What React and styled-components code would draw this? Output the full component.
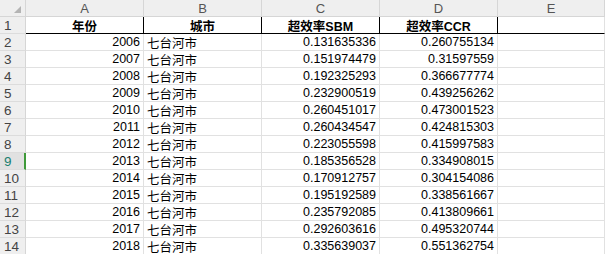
import React from 'react';
import styled, { createGlobalStyle } from 'styled-components';

const GlobalStyle = createGlobalStyle`
    body {
        margin: 0;
        background: #ffffff;
        font-family: "Liberation Sans", "Noto Sans CJK SC", sans-serif;
    }
`;

const Sheet = styled.div`
    display: grid;
    grid-template-columns: 26px 118px 118px 118px 118px 1fr;
    grid-auto-rows: 17px;
    width: 605px;
    height: 254px;
    overflow: hidden;
`;

const Corner = styled.div`
    background: #efefef;
    border-right: 1px solid #d6d6d6;
    border-bottom: 1px solid #d6d6d6;
    position: relative;
    &::after {
        content: '';
        position: absolute;
        right: 4px;
        bottom: 3px;
        border-left: 7px solid transparent;
        border-bottom: 7px solid #b4b4b4;
    }
`;

const ColHead = styled.div`
    background: #efefef;
    border-right: 1px solid #d6d6d6;
    border-bottom: 1px solid #d6d6d6;
    color: #555555;
    font-size: 13px;
    display: flex;
    align-items: center;
    justify-content: center;
`;

const RowHead = styled.div`
    background: ${p => (p.active ? '#e1e1e1' : '#efefef')};
    border-right: ${p => (p.active ? '2px solid #3f9a3a' : '1px solid #d6d6d6')};
    border-bottom: 1px solid #dcdcdc;
    color: ${p => (p.active ? '#1a7f6f' : '#444444')};
    font-size: 13.5px;
    padding-left: 4px;
    display: flex;
    align-items: center;
`;

const Cell = styled.div`
    border-right: 1px solid ${p => (p.head && !p.last ? '#000000' : '#e1e1e1')};
    border-bottom: 1px solid ${p => (p.head ? '#000000' : '#e1e1e1')};
    font-size: 12.5px;
    font-weight: ${p => (p.head ? 700 : 400)};
    color: #000000;
    display: flex;
    align-items: center;
    justify-content: ${p => (p.align === 'right' ? 'flex-end' : p.align === 'center' ? 'center' : 'flex-start')};
    padding: 0 3px;
    white-space: nowrap;
    overflow: hidden;
`;

const rows = [
    ['2006', '0.131635336', '0.260755134'],
    ['2007', '0.151974479', '0.31597559'],
    ['2008', '0.192325293', '0.366677774'],
    ['2009', '0.232900519', '0.439256262'],
    ['2010', '0.260451017', '0.473001523'],
    ['2011', '0.260434547', '0.424815303'],
    ['2012', '0.223055598', '0.415997583'],
    ['2013', '0.185356528', '0.334908015'],
    ['2014', '0.170912757', '0.304154086'],
    ['2015', '0.195192589', '0.338561667'],
    ['2016', '0.235792085', '0.413809661'],
    ['2017', '0.292603616', '0.495320744'],
    ['2018', '0.335639037', '0.551362754'],
];

const App = () => (
    <>
        <GlobalStyle />
        <Sheet>
            <Corner />
            {['A', 'B', 'C', 'D', 'E'].map(l => (
                <ColHead key={l}>{l}</ColHead>
            ))}

            <RowHead>1</RowHead>
            <Cell head align="center">年份</Cell>
            <Cell head align="center">城市</Cell>
            <Cell head align="center">超效率SBM</Cell>
            <Cell head align="center">超效率CCR</Cell>
            <Cell head last />

            {rows.map(([year, sbm, ccr], i) => (
                <React.Fragment key={year}>
                    <RowHead active={i + 2 === 9}>{i + 2}</RowHead>
                    <Cell align="right">{year}</Cell>
                    <Cell>七台河市</Cell>
                    <Cell align="right">{sbm}</Cell>
                    <Cell align="right">{ccr}</Cell>
                    <Cell />
                </React.Fragment>
            ))}
        </Sheet>
    </>
);

export default App;
